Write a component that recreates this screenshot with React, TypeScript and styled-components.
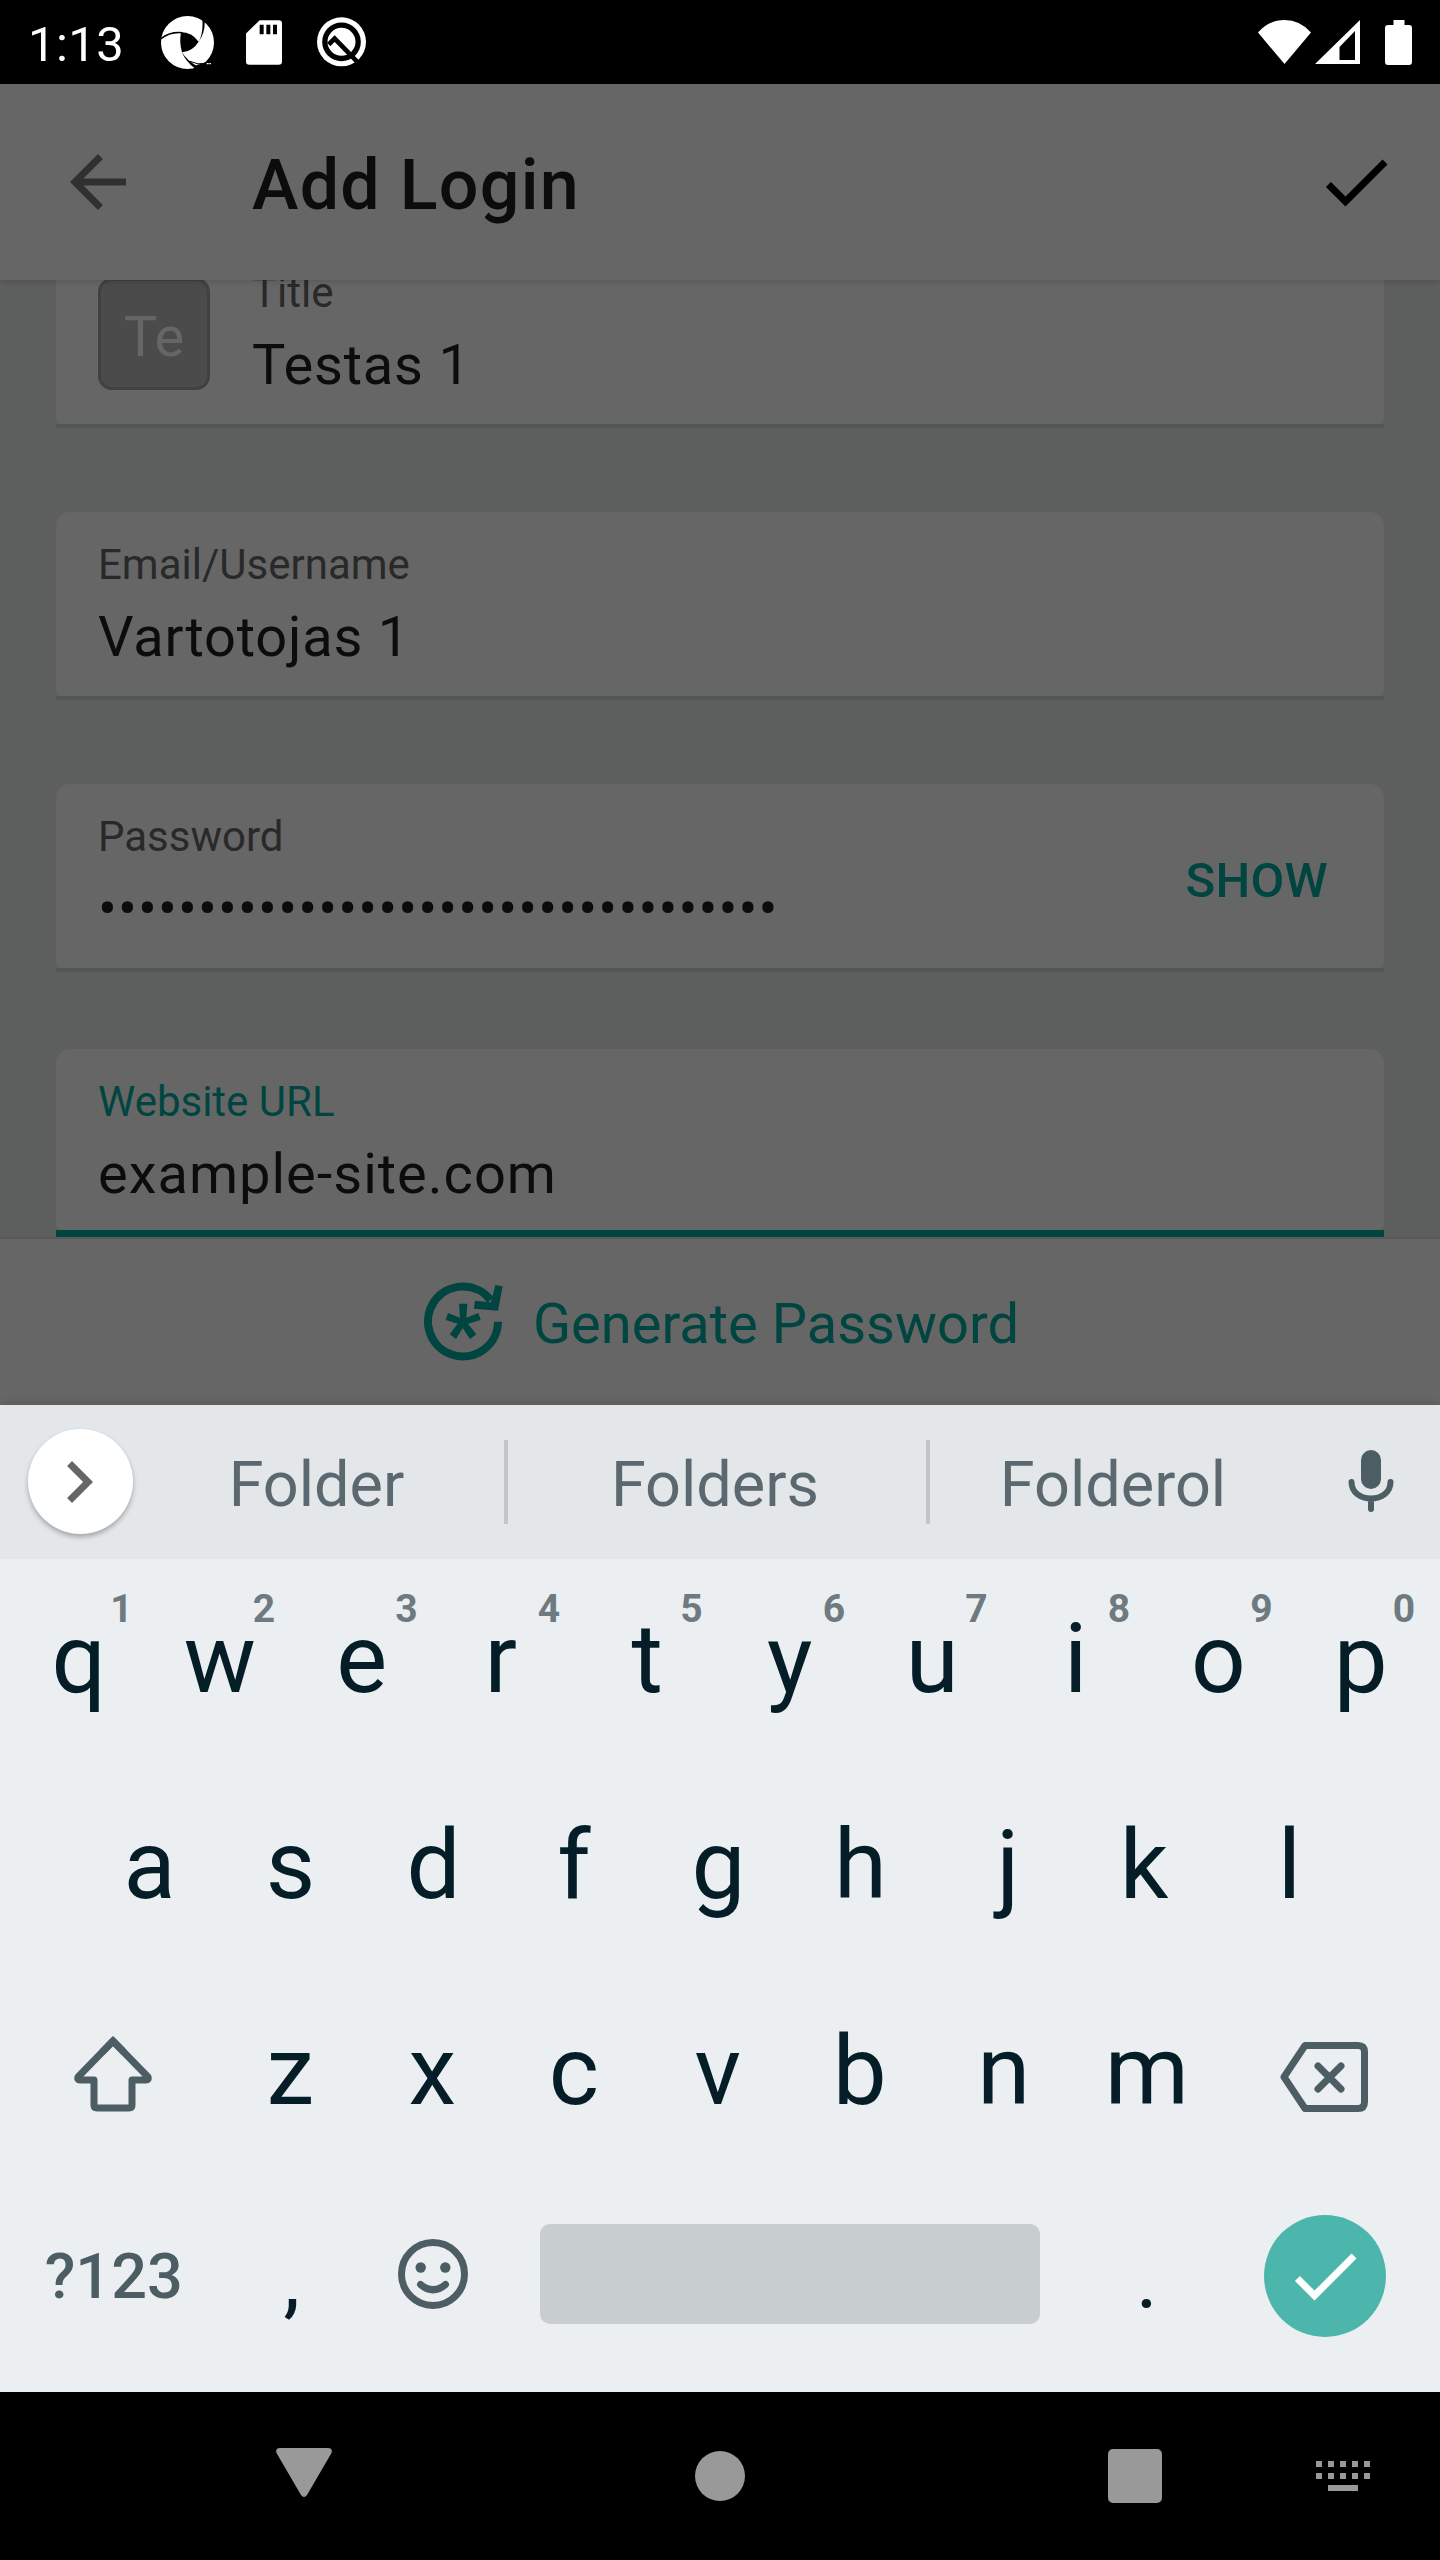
import React from "react";
import styled, { createGlobalStyle } from "styled-components";

const GlobalStyle = createGlobalStyle`
  * { box-sizing: border-box; }
  body { margin: 0; background: #000; }
  svg { display: block; flex: none; }
`;

const teal = "#004540";
const keyInk = "#041d27";
const keyIcon = "#4c5d64";

const Screen = styled.div`
  width: 1440px;
  height: 2560px;
  display: flex;
  flex-direction: column;
  overflow: hidden;
  background: #000;
  font-family: Roboto, "Liberation Sans", sans-serif;
`;

/* ---------- status bar ---------- */

const StatusBar = styled.header`
  height: 84px;
  flex: none;
  display: flex;
  align-items: center;
  justify-content: space-between;
  padding: 0 28px;
  background: #000;
  color: #fff;
`;

const StatusGroup = styled.div`
  display: flex;
  align-items: center;
`;

const Clock = styled.span`
  width: 133px;
  font-size: 49px;
  line-height: 60px;
  letter-spacing: 0.4px;
  padding-top: 5px;
`;

const StatusIcon = styled.svg<{ $gap?: number }>`
  margin-left: ${(p) => p.$gap ?? 0}px;
  fill: #fff;
`;

/* ---------- toolbar ---------- */

const Toolbar = styled.div`
  height: 196px;
  flex: none;
  display: flex;
  align-items: center;
  padding: 0 42px 0 56px;
  background: #666;
  box-shadow: 0 2px 5px rgba(0, 0, 0, 0.14);
  z-index: 1;
`;

const ToolbarTitle = styled.h1`
  flex: 1;
  margin: 5px 0 0 112px;
  font-size: 70px;
  line-height: 84px;
  font-weight: 500;
  letter-spacing: 1.25px;
  color: #0c0c0c;
`;

/* ---------- form ---------- */

const Form = styled.main`
  height: 957px;
  flex: none;
  overflow: hidden;
  padding: 0 56px;
  background: #5c5f5d;
`;

const Card = styled.section<{ $top: number }>`
  height: 188px;
  margin-top: ${(p) => p.$top}px;
  display: flex;
  flex-direction: column;
`;

const CardBody = styled.div`
  flex: 1;
  display: flex;
  padding: 0 56px 0 42px;
  background: #666;
  border-radius: 14px 14px 5px 5px;
`;

const CardLine = styled.div<{ $focused?: boolean }>`
  height: ${(p) => (p.$focused ? 7 : 4)}px;
  background: ${(p) => (p.$focused ? teal : "#54575a")};
`;

const Avatar = styled.div`
  width: 112px;
  height: 112px;
  margin: 38px 42px 0 0;
  border: 3px solid #414141;
  border-radius: 14px;
  background: #4b4b4b;
  display: flex;
  align-items: center;
  justify-content: center;
  font-size: 56px;
  line-height: 66px;
  padding-top: 5px;
  color: #666;
`;

const FieldText = styled.div`
  flex: 1;
  padding-top: 28px;
`;

const Label = styled.div<{ $focused?: boolean }>`
  font-size: 42px;
  line-height: 50px;
  color: ${(p) => (p.$focused ? teal : "#292929")};
`;

const Value = styled.div<{ $tracking: number }>`
  margin-top: 14px;
  font-size: 56px;
  line-height: 66px;
  letter-spacing: ${(p) => p.$tracking}px;
  color: #0c0c0c;
  white-space: nowrap;
`;

const ShowButton = styled.span`
  padding-top: 68px;
  font-size: 49px;
  line-height: 58px;
  font-weight: 500;
  letter-spacing: 0.3px;
  color: ${teal};
`;

const GenerateBar = styled.div`
  height: 168px;
  flex: none;
  display: flex;
  align-items: center;
  justify-content: center;
  gap: 28px;
  border-top: 2px solid #5a5a5a;
  background: #666;
  color: ${teal};
  font-size: 56px;
  line-height: 66px;
`;

const GenerateText = styled.span`
  padding-top: 4px;
`;

/* ---------- keyboard ---------- */

const Keyboard = styled.section`
  height: 987px;
  flex: none;
  background: #ebeff2;
  box-shadow: 0 -2px 8px rgba(0, 0, 0, 0.12);
  color: ${keyInk};
`;

const Suggestions = styled.div`
  height: 154px;
  display: flex;
  align-items: center;
  padding: 0 46px 0 28px;
  background: #e3e7ea;
`;

const ExpandButton = styled.div`
  width: 105px;
  height: 105px;
  margin-bottom: 1px;
  border-radius: 50%;
  display: flex;
  align-items: center;
  justify-content: center;
  padding-right: 3px;
  background: #fff;
  box-shadow: 0 3px 5px rgba(0, 0, 0, 0.28);
`;

const Suggestion = styled.div<{ $width: number }>`
  width: ${(p) => p.$width}px;
  padding: 5px 4px 0 0;
  text-align: center;
  font-size: 63px;
  line-height: 74px;
  color: #5b6870;
`;

const Divider = styled.i`
  width: 4px;
  height: 84px;
  background: #c2c6c9;
`;

const MicIcon = styled.svg`
  margin: 0 0 3px 48px;
`;

const KeyRow = styled.div<{ $indent?: number }>`
  height: 206px;
  display: flex;
  padding: 0 7px 6px ${(p) => p.$indent ?? 7}px;
`;

const Key = styled.div<{ $width?: number }>`
  position: relative;
  width: ${(p) => p.$width ?? 142.5}px;
  display: flex;
  align-items: center;
  justify-content: center;
`;

const Letter = styled.span<{ $nudge: number }>`
  margin-left: ${(p) => Math.max(0, p.$nudge * 2)}px;
  margin-right: ${(p) => Math.max(0, p.$nudge * -2)}px;
  font-size: 96px;
  line-height: 112px;
`;

const Punctuation = styled.span`
  padding-top: 5px;
  font-size: 84px;
  line-height: 100px;
`;

const Hint = styled.span`
  position: absolute;
  top: 27px;
  left: 94.5px;
  width: 40px;
  text-align: center;
  font-size: 39px;
  line-height: 46px;
  font-weight: 700;
  color: #6e7a80;
`;

const SymbolsLabel = styled.span`
  font-size: 63px;
  line-height: 74px;
  font-weight: 500;
  color: ${keyIcon};
`;

const SpaceBar = styled.div`
  width: 500px;
  height: 100px;
  margin: 0 2px 6px 0;
  border-radius: 10px;
  background: #c8cdd0;
`;

const EnterButton = styled.div`
  width: 122px;
  height: 122px;
  margin-bottom: 2px;
  border-radius: 50%;
  display: flex;
  align-items: center;
  justify-content: center;
  background: #4db6ac;
`;

const LineIcon = styled.svg<{ $shift?: number }>`
  margin: ${(p) => Math.max(0, (p.$shift ?? 0) * 2)}px 2px
    ${(p) => Math.max(0, (p.$shift ?? 0) * -2)}px 0;
  fill: none;
  stroke: ${keyIcon};
  stroke-width: 7;
  stroke-linecap: round;
  stroke-linejoin: round;
`;

/* ---------- navigation bar ---------- */

const NavBar = styled.nav`
  height: 168px;
  flex: none;
  display: flex;
  align-items: center;
  padding-left: 276px;
  background: #000;
`;

const BackMark = styled.svg`
  margin-bottom: 7px;
  fill: #999;
`;

const HomeMark = styled.div`
  width: 50px;
  height: 50px;
  margin-left: 363px;
  border-radius: 50%;
  background: #999;
`;

const RecentsMark = styled.div`
  width: 54px;
  height: 54px;
  margin: 0 154px 0 363px;
  border-radius: 5px;
  background: #999;
`;

const CheckIcon = ({ color }: { color: string }) => (
  <svg width="84" height="84" viewBox="0 0 24 24" fill={color}>
    <path d="M9 16.17L4.83 12l-1.42 1.41L9 19 21 7l-1.41-1.41z" />
  </svg>
);

type FieldProps = {
  label: string;
  value: string;
  top: number;
  tracking: number;
  focused?: boolean;
  avatar?: string;
  action?: string;
};

const Field = ({ label, value, top, tracking, focused, avatar, action }: FieldProps) => (
  <Card $top={top}>
    <CardBody>
      {avatar && <Avatar>{avatar}</Avatar>}
      <FieldText>
        <Label $focused={focused}>{label}</Label>
        <Value $tracking={tracking}>{value}</Value>
      </FieldText>
      {action && <ShowButton>{action}</ShowButton>}
    </CardBody>
    <CardLine $focused={focused} />
  </Card>
);

const nudges: Record<string, number> = {
  q: 0.5, w: -1, e: -1.5, r: -5, t: -1, y: -1, u: -1,
  s: -1.5, d: -1, f: -3, g: -1, h: -1.5, j: 3.5, k: -3,
  z: -1.5, x: -2, c: -3, v: -1.5, b: -2, n: -0.5,
};

const LetterKey = ({ letter, hint }: { letter: string; hint?: number }) => (
  <Key>
    <Letter $nudge={nudges[letter] ?? 0}>{letter}</Letter>
    {hint !== undefined && <Hint>{hint}</Hint>}
  </Key>
);

const dotColumns = [0, 12, 24, 36, 48];

export default function App() {
  return (
    <Screen>
      <GlobalStyle />
      <StatusBar>
        <StatusGroup>
          <Clock>1:13</Clock>
          <StatusIcon width="53" height="53" viewBox="33 48 159 159">
            <circle cx="112.500" cy="127.500" r="79.500" />
            <path
              d="M93 97 Q125 97 146 125 Q128 154 96 157 Q87 128 93 97 Z"
              fill="#000"
            />
            <path d="M33 116 Q60 94 98 98" fill="none" stroke="#000" strokeWidth="4.500" />
            <path d="M146 126 Q162 98 156 44 L164 62 Q166 96 146 126 Z" fill="#000" />
            <path d="M95 155 Q112 184 146 200 L136 206 Q108 186 95 155 Z" fill="#000" />
            <path d="M138 196 L170 186 L180 200 L150 212 Z" fill="#000" />
            <path d="M120 184 Q145 196 166 190" fill="none" stroke="#000" strokeWidth="3" />
            <path d="M170 189h6v4h-6z M178 189h5v4h-5z" />
          </StatusIcon>
          <StatusIcon $gap={32} width="36" height="45" viewBox="289 60 108 134">
            <path d="M330 60 H387 Q397 60 397 70 V184 Q397 194 387 194 H299 Q289 194 289 184 V100 Z" />
            <path d="M330 74h12v28h-12z M350 74h12v28h-12z M370 74h12v28h-12z" fill="#000" />
          </StatusIcon>
          <StatusIcon $gap={35} width="49" height="50" viewBox="501 52 147 149">
            <circle cx="574.500" cy="126" r="73.500" />
            <circle cx="574.500" cy="126" r="58" fill="#000" />
            <circle cx="574.500" cy="126" r="42" />
            <path
              d="M536 134 L554 116 L622 186"
              fill="none"
              stroke="#000"
              strokeWidth="14"
            />
          </StatusIcon>
        </StatusGroup>
        <StatusGroup>
          <StatusIcon width="53" height="44" viewBox="0 0 53 44">
            <path d="M0 12.500 Q11 0 26.500 0 Q42 0 53 12.500 L26.500 44 Z" />
          </StatusIcon>
          <StatusIcon $gap={4} width="45" height="44" viewBox="0 0 45 44">
            <path
              fillRule="evenodd"
              d="M45 0 V44 H0 Z M40 11 L24.500 27 V40 H40 Z"
            />
          </StatusIcon>
          <StatusIcon $gap={25} width="27" height="45" viewBox="0 0 27 45">
            <path d="M8.500 0 H19.500 V5 H24 Q27 5 27 8 V42 Q27 45 24 45 H3 Q0 45 0 42 V8 Q0 5 3 5 H8.500 Z" />
          </StatusIcon>
        </StatusGroup>
      </StatusBar>

      <Toolbar>
        <svg width="84" height="84" viewBox="0 0 24 24" fill="#303030">
          <path d="M20 11H7.830l5.590-5.590L12 4l-8 8 8 8 1.410-1.410L7.830 13H20v-2z" />
        </svg>
        <ToolbarTitle>Add Login</ToolbarTitle>
        <CheckIcon color="#000" />
      </Toolbar>

      <Form>
        <Field top={-40} label="Title" value="Testas 1" tracking={0.8} avatar="Te" />
        <Field top={84} label="Email/Username" value="Vartotojas 1" tracking={0.78} />
        <Field
          top={84}
          label="Password"
          value={"•".repeat(34)}
          tracking={1.12}
          action="SHOW"
        />
        <Field top={77} label="Website URL" value="example-site.com" tracking={1} focused />
      </Form>

      <GenerateBar>
        <svg width="84" height="84" viewBox="63 58 252 252" fill={teal}>
          <path
            d="M294 183 A105 105 0 1 1 272 118"
            fill="none"
            stroke={teal}
            strokeWidth="24"
          />
          <path d="M286 73 L308 77 L294 150 L222 144 L225 120 L273 125 Z" />
          <path d="M177 129 H202 L199 171 L235 157 L242 178 L204 189 L229 221 L210 235 L188 202 L168 235 L149 221 L173 189 L137 178 L144 157 L180 171 Z" />
        </svg>
        <GenerateText>Generate Password</GenerateText>
      </GenerateBar>

      <Keyboard>
        <Suggestions>
          <ExpandButton>
            <svg width="84" height="84" viewBox="0 0 24 24" fill="#666">
              <path d="M10 6L8.590 7.410 13.170 12l-4.580 4.590L10 18l6-6z" />
            </svg>
          </ExpandButton>
          <Suggestion $width={371}>Folder</Suggestion>
          <Divider />
          <Suggestion $width={418}>Folders</Suggestion>
          <Divider />
          <Suggestion $width={370}>Folderol</Suggestion>
          <MicIcon width="46" height="64" viewBox="0 0 46 64">
            <rect x="13" y="1" width="20" height="39" rx="10" fill={keyIcon} />
            <path
              d="M3.500 33 C3.500 55 42.500 55 42.500 33 M23 50 V60"
              fill="none"
              stroke={keyIcon}
              strokeWidth="6"
              strokeLinecap="round"
            />
          </MicIcon>
        </Suggestions>

        <KeyRow>
          {"qwertyuiop".split("").map((k, i) => (
            <LetterKey key={k} letter={k} hint={(i + 1) % 10} />
          ))}
        </KeyRow>
        <KeyRow $indent={78.25}>
          {"asdfghjkl".split("").map((k) => (
            <LetterKey key={k} letter={k} />
          ))}
        </KeyRow>
        <KeyRow>
          <Key $width={213.5}>
            <LineIcon $shift={3} width="78" height="76" viewBox="0 0 78 76">
              <path d="M39 5 L4 41 Q3 44 6 44 H20 V69 Q20 72 23 72 H55 Q58 72 58 69 V44 H72 Q75 44 74 41 Z" />
              <path d="M29 15.300 L39 5 L49 15.300" strokeLinejoin="miter" />
            </LineIcon>
          </Key>
          {"zxcvbnm".split("").map((k) => (
            <LetterKey key={k} letter={k} />
          ))}
          <Key $width={213.5}>
            <LineIcon $shift={6} width="88" height="70" viewBox="0 0 88 70">
              <path d="M25 3.500 H78 Q84.500 3.500 84.500 10 V60 Q84.500 66.500 78 66.500 H25 L4 35 Z" />
              <path d="M38 24 L61 47 M61 24 L38 47" />
            </LineIcon>
          </Key>
        </KeyRow>
        <KeyRow>
          <Key $width={213.5}>
            <SymbolsLabel>?123</SymbolsLabel>
          </Key>
          <Key>
            <Punctuation>,</Punctuation>
          </Key>
          <Key>
            <LineIcon $shift={-3} width="70" height="70" viewBox="0 0 70 70">
              <circle cx="35" cy="35" r="31.500" />
              <path d="M22.500 45.500 Q35 56 47.500 45.500" />
              <circle cx="22.700" cy="28.500" r="5.200" fill={keyIcon} stroke="none" />
              <circle cx="47.300" cy="28.500" r="5.200" fill={keyIcon} stroke="none" />
            </LineIcon>
          </Key>
          <Key $width={570}>
            <SpaceBar />
          </Key>
          <Key>
            <Punctuation>.</Punctuation>
          </Key>
          <Key $width={213.5}>
            <EnterButton>
              <CheckIcon color="#fff" />
            </EnterButton>
          </Key>
        </KeyRow>
      </Keyboard>

      <NavBar>
        <BackMark width="56" height="49" viewBox="0 0 56 49">
          <path d="M4 0 H52 Q57 0 55.500 5 L31 47 Q28 51 25 47 L0.500 5 Q-1 0 4 0 Z" />
        </BackMark>
        <HomeMark />
        <RecentsMark />
        <svg width="54" height="32" viewBox="0 0 54 32" fill="#999">
          {dotColumns.map((x) => (
            <path key={x} d={`M${x} 1h6v6h-6z M${x} 13h6v6h-6z`} />
          ))}
          <path d="M12 25h30v6h-30z" />
        </svg>
      </NavBar>
    </Screen>
  );
}
